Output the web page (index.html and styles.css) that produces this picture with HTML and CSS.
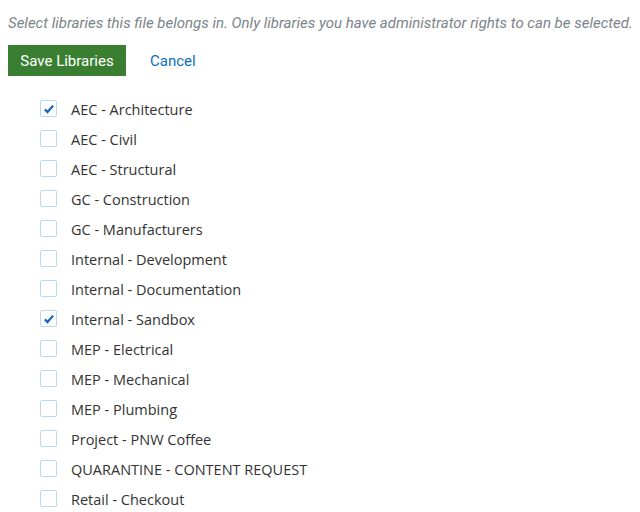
FILE: index.html
```html
<!DOCTYPE html>
<html>
<head>
<meta charset="utf-8">
<link rel="stylesheet" href="styles.css">
</head>
<body>
<div class="page">
  <p class="intro">Select libraries this file belongs in. Only libraries you have administrator rights to can be selected.</p>
  <div class="actions">
    <button class="btn-save">Save Libraries</button>
    <a class="cancel" href="#">Cancel</a>
  </div>
  <ul class="libs">
    <li class="lib"><span class="box checked"><svg viewBox="0 0 16 16" width="12" height="12"><path d="M2.5 8.5 L6 12 L13.5 3.5" fill="none" stroke="#1565c0" stroke-width="3"/></svg></span><span class="name">AEC - Architecture</span></li>
    <li class="lib"><span class="box"></span><span class="name">AEC - Civil</span></li>
    <li class="lib"><span class="box"></span><span class="name">AEC - Structural</span></li>
    <li class="lib"><span class="box"></span><span class="name">GC - Construction</span></li>
    <li class="lib"><span class="box"></span><span class="name">GC - Manufacturers</span></li>
    <li class="lib"><span class="box"></span><span class="name">Internal - Development</span></li>
    <li class="lib"><span class="box"></span><span class="name">Internal - Documentation</span></li>
    <li class="lib"><span class="box checked"><svg viewBox="0 0 16 16" width="12" height="12"><path d="M2.5 8.5 L6 12 L13.5 3.5" fill="none" stroke="#1565c0" stroke-width="3"/></svg></span><span class="name">Internal - Sandbox</span></li>
    <li class="lib"><span class="box"></span><span class="name">MEP - Electrical</span></li>
    <li class="lib"><span class="box"></span><span class="name">MEP - Mechanical</span></li>
    <li class="lib"><span class="box"></span><span class="name">MEP - Plumbing</span></li>
    <li class="lib"><span class="box"></span><span class="name">Project - PNW Coffee</span></li>
    <li class="lib"><span class="box"></span><span class="name">QUARANTINE - CONTENT REQUEST</span></li>
    <li class="lib"><span class="box"></span><span class="name">Retail - Checkout</span></li>
  </ul>
</div>
</body>
</html>
```
FILE: styles.css
```css
html, body {
  margin: 0;
  padding: 0;
  background: #ffffff;
}
.page {
  padding: 13px 0 0 8px;
  font-family: "Open Sans", "Noto Sans", sans-serif;
  color: #333333;
}
.intro {
  margin: 0;
  font-family: Roboto, sans-serif;
  font-style: italic;
  font-size: 15px;
  line-height: 20px;
  color: #7b8489;
}
.actions {
  display: flex;
  align-items: center;
  margin-top: 12px;
  gap: 24px;
}
.btn-save {
  background: #3a7f31;
  color: #ffffff;
  border: none;
  font-family: Roboto, sans-serif;
  font-size: 15px;
  height: 31px;
  padding: 0;
  width: 118px;
}
.cancel {
  font-family: Roboto, sans-serif;
  font-size: 15px;
  color: #0b6fbf;
  text-decoration: none;
}
.libs {
  list-style: none;
  margin: 18px 0 0 0;
  padding: 0 0 0 32px;
}
.lib {
  display: flex;
  align-items: center;
  height: 30px;
  gap: 14px;
}
.box {
  width: 15px;
  height: 15px;
  border: 1px solid #b6daf0;
  border-radius: 2px;
  display: flex;
  align-items: center;
  justify-content: center;
  flex: none;
  margin-bottom: 1px;
}
.name {
  font-size: 14.5px;
  color: #333333;
}
```
